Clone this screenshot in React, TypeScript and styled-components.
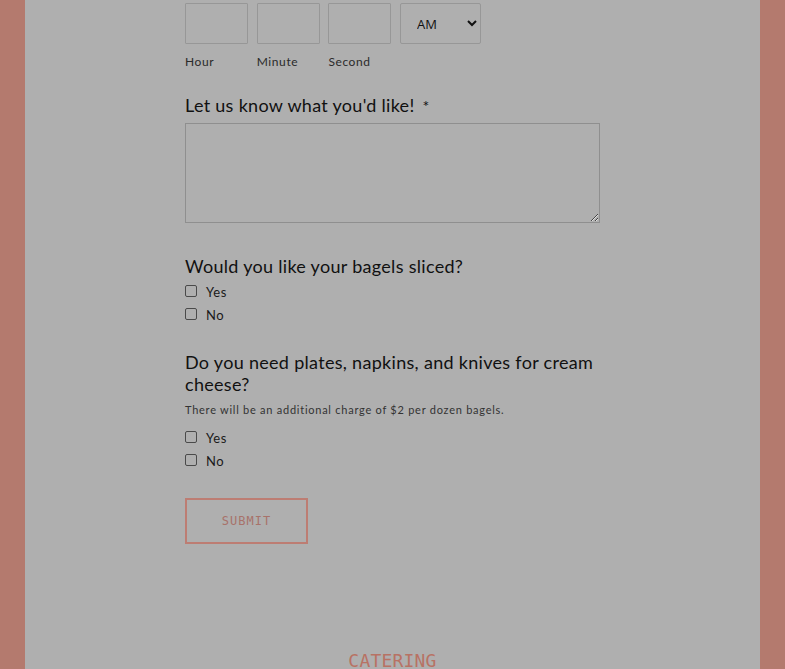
import styled, { createGlobalStyle } from "styled-components";

const GlobalStyle = createGlobalStyle`
  html, body {
    margin: 0;
    padding: 0;
    background: #b47a6e;
    height: 100%;
    overflow: hidden;
  }
  * { box-sizing: border-box; }
`;

const Page = styled.div`
  display: flex;
  justify-content: center;
  height: 669px;
  padding: 0 25px;
  font-family: Lato, "Noto Sans", sans-serif;
  color: #111;
`;

const Panel = styled.div`
  width: 735px;
  background: #afafaf;
  display: flex;
  flex-direction: column;
  align-items: center;
  padding-top: 3px;
`;

const Form = styled.form`
  width: 415px;
  display: flex;
  flex-direction: column;
`;

const TimeRow = styled.div`
  display: flex;
  gap: 8.7px;
`;

const TimeField = styled.div`
  display: flex;
  flex-direction: column;
`;

const TimeBox = styled.input`
  width: 63px;
  height: 41px;
  border: 1px solid #979797;
  background: transparent;
  border-radius: 1px;
`;

const Select = styled.select`
  width: 81px;
  height: 41px;
  border: 1px solid #979797;
  background: transparent;
  border-radius: 2px;
  font-family: "Open Sans", sans-serif;
  font-size: 13px;
  color: #111;
  padding-left: 12px;
`;

const SmallLabel = styled.span`
  font-size: 12px;
  letter-spacing: 0.6px;
  margin-top: 10px;
  color: #2a2a2a;
`;

const Question = styled.div<{ $top: number }>`
  font-size: 18px;
  line-height: 22px;
  letter-spacing: 0.3px;
  margin-top: ${(p) => p.$top}px;
`;

const Required = styled.span`
  font-size: 16px;
  margin-left: 8px;
`;

const TextArea = styled.textarea`
  width: 415px;
  height: 100px;
  margin-top: 6px;
  border: 1px solid #8f8f8f;
  background: transparent;
`;

const Note = styled.div`
  font-size: 11px;
  letter-spacing: 0.75px;
  color: #333;
  margin-top: 8px;
`;

const Options = styled.div<{ $top: number }>`
  display: flex;
  flex-direction: column;
  gap: 5px;
  margin-top: ${(p) => p.$top}px;
`;

const Option = styled.label`
  display: flex;
  align-items: center;
  font-size: 13px;
  letter-spacing: 0.6px;
  height: 18px;
  color: #1a1a1a;
`;

const Box = styled.input`
  appearance: none;
  margin: -2px 9px 0 0;
  width: 12px;
  height: 12px;
  border: 1px solid #4a4a4a;
  border-radius: 2px;
  background: transparent;
`;

const Submit = styled.button`
  width: 123px;
  height: 46px;
  margin-top: 28px;
  border: 2px solid #bd7d73;
  background: transparent;
  color: #a8726a;
  font-family: "DejaVu Sans Mono", monospace;
  font-size: 12px;
  letter-spacing: 1px;
`;

const SectionTitle = styled.h2`
  margin: 0;
  margin-top: 106px;
  font-family: "DejaVu Sans Mono", monospace;
  font-weight: normal;
  font-size: 18px;
  letter-spacing: 0.2px;
  color: #b87264;
`;

function CheckGroup({ name, top }: { name: string; top: number }) {
  return (
    <Options $top={top}>
      <Option>
        <Box type="checkbox" name={name} />
        Yes
      </Option>
      <Option>
        <Box type="checkbox" name={name} />
        No
      </Option>
    </Options>
  );
}

export default function App() {
  return (
    <>
      <GlobalStyle />
      <Page>
        <Panel>
          <Form onSubmit={(e) => e.preventDefault()}>
            <TimeRow>
              <TimeField>
                <TimeBox />
                <SmallLabel>Hour</SmallLabel>
              </TimeField>
              <TimeField>
                <TimeBox />
                <SmallLabel>Minute</SmallLabel>
              </TimeField>
              <TimeField>
                <TimeBox />
                <SmallLabel>Second</SmallLabel>
              </TimeField>
              <TimeField>
                <Select defaultValue="AM">
                  <option>AM</option>
                  <option>PM</option>
                </Select>
              </TimeField>
            </TimeRow>

            <Question $top={25}>
              Let us know what you'd like!<Required>*</Required>
            </Question>
            <TextArea />

            <Question $top={32}>Would you like your bagels sliced?</Question>
            <CheckGroup name="sliced" top={6} />

            <Question $top={27}>
              Do you need plates, napkins, and knives for cream cheese?
            </Question>
            <Note>There will be an additional charge of $2 per dozen bagels.</Note>
            <CheckGroup name="plates" top={13} />

            <Submit type="submit">SUBMIT</Submit>
          </Form>
          <SectionTitle>CATERING</SectionTitle>
        </Panel>
      </Page>
    </>
  );
}
